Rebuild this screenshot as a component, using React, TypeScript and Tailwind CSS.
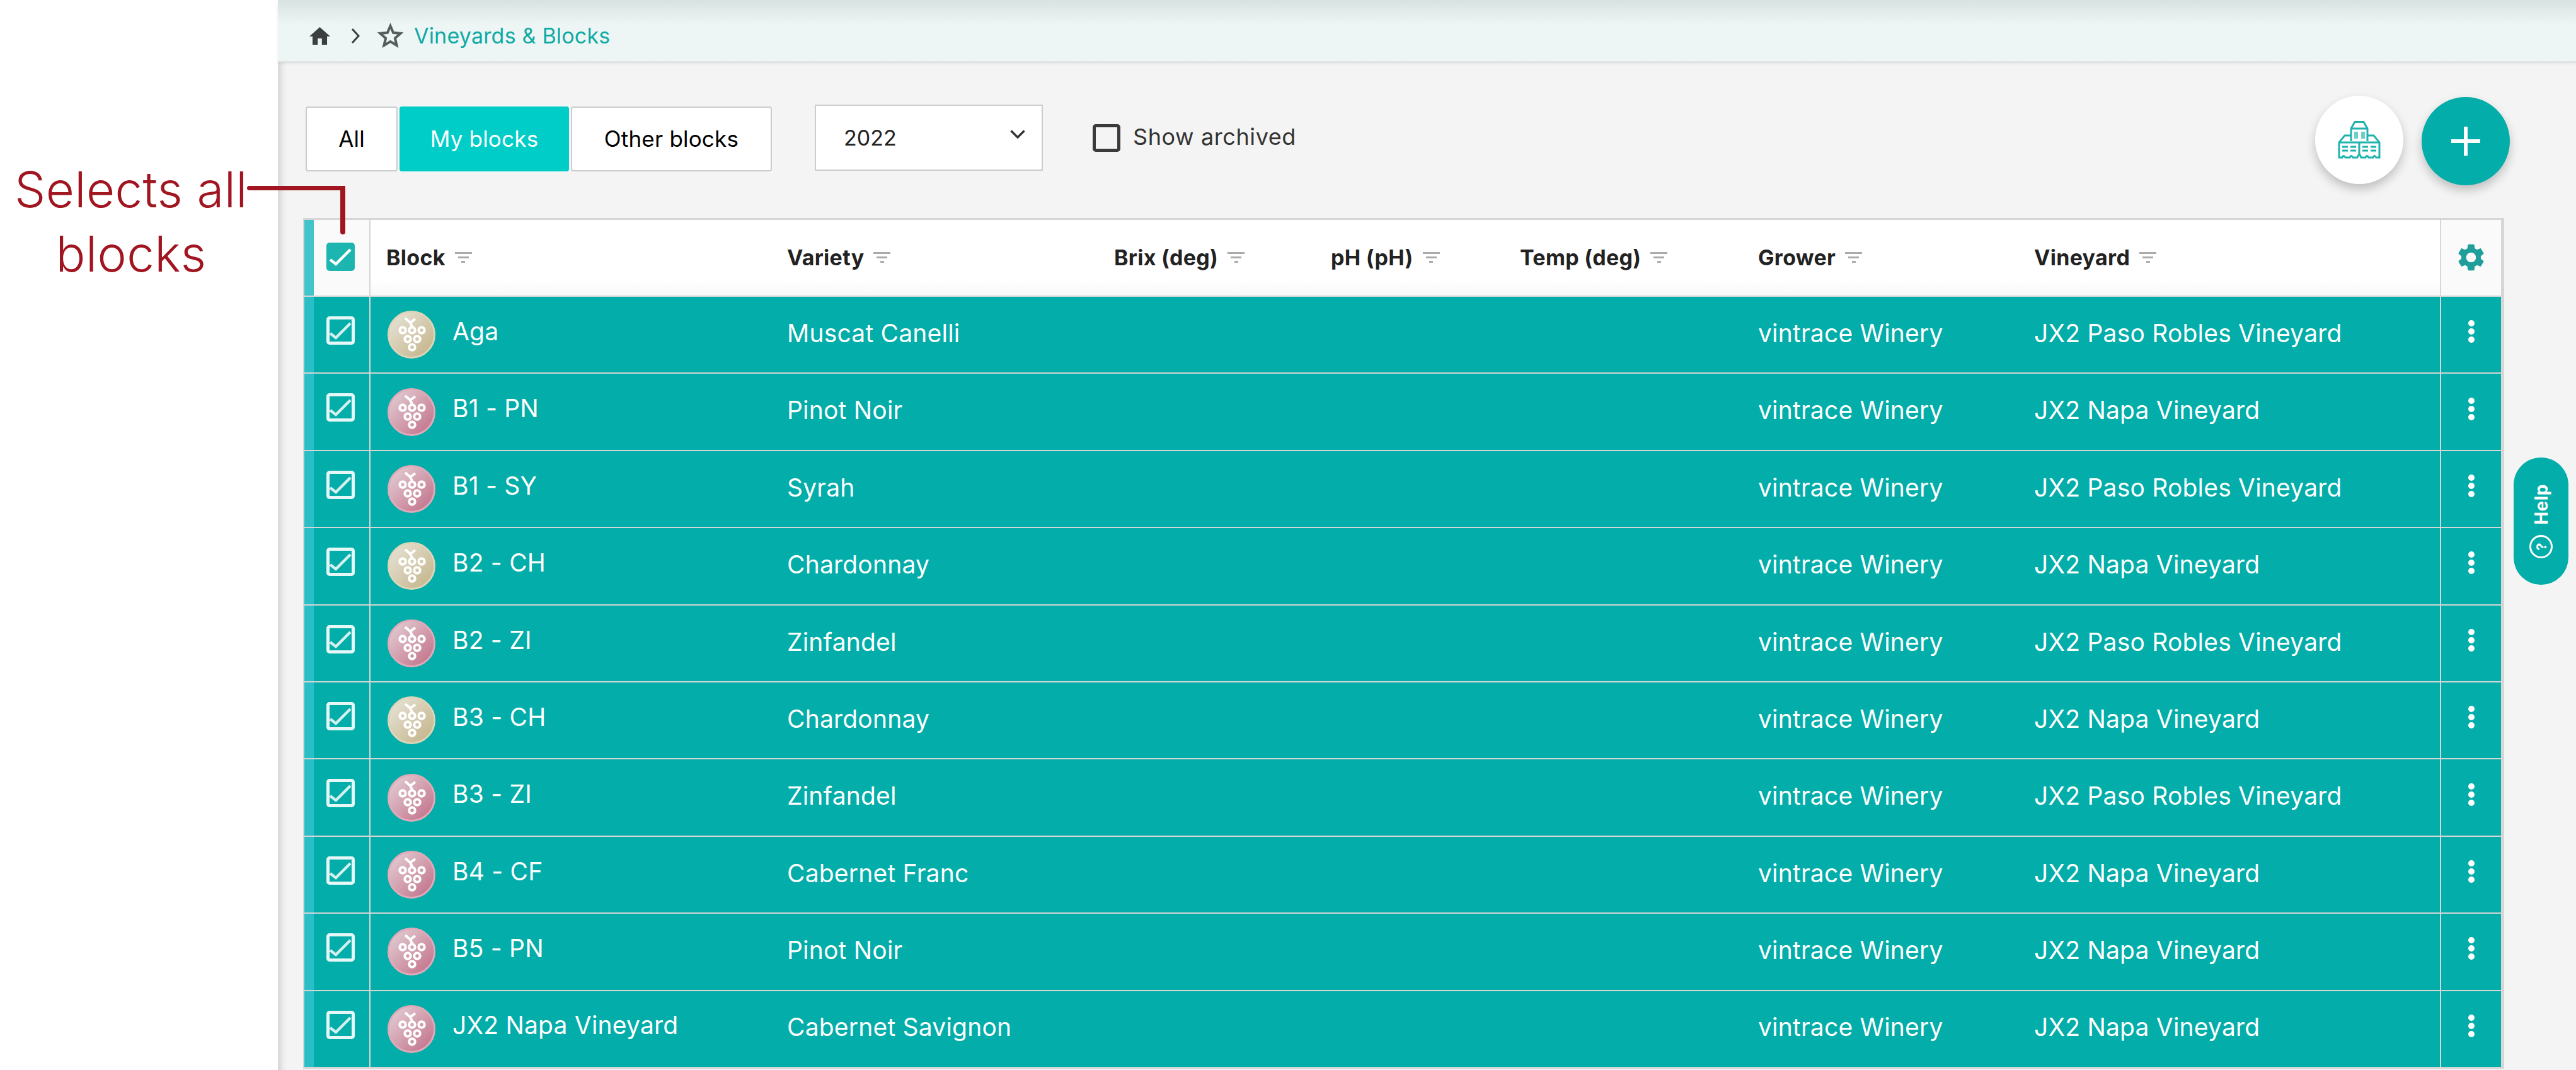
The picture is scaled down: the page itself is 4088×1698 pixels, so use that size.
import React from 'react';

interface BlockRow {
    name: string;
    variety: string;
    vineyard: string;
    white?: boolean;
}

const rows: BlockRow[] = [
    { name: 'Aga', variety: 'Muscat Canelli', vineyard: 'JX2 Paso Robles Vineyard', white: true },
    { name: 'B1 - PN', variety: 'Pinot Noir', vineyard: 'JX2 Napa Vineyard' },
    { name: 'B1 - SY', variety: 'Syrah', vineyard: 'JX2 Paso Robles Vineyard' },
    { name: 'B2 - CH', variety: 'Chardonnay', vineyard: 'JX2 Napa Vineyard', white: true },
    { name: 'B2 - ZI', variety: 'Zinfandel', vineyard: 'JX2 Paso Robles Vineyard' },
    { name: 'B3 - CH', variety: 'Chardonnay', vineyard: 'JX2 Napa Vineyard', white: true },
    { name: 'B3 - ZI', variety: 'Zinfandel', vineyard: 'JX2 Paso Robles Vineyard' },
    { name: 'B4 - CF', variety: 'Cabernet Franc', vineyard: 'JX2 Napa Vineyard' },
    { name: 'B5 - PN', variety: 'Pinot Noir', vineyard: 'JX2 Napa Vineyard' },
    { name: 'JX2 Napa Vineyard', variety: 'Cabernet Savignon', vineyard: 'JX2 Napa Vineyard' },
];

const gridCols = 'grid grid-cols-[105px_636px_519px_344px_300px_378px_438px_669px_97px]';

const SortIcon = () => (
    <span className="ml-[15px] flex flex-col items-center gap-[4.5px]">
        <span className="h-[2.5px] w-[27px] bg-[#aaaaaa]" />
        <span className="h-[2.5px] w-[17px] bg-[#aaaaaa]" />
        <span className="h-[2.5px] w-[6px] bg-[#aaaaaa]" />
    </span>
);

const HeaderCell = ({ label }: { label: string }) => (
    <div className="flex items-center pl-[25px] pb-[1px] text-[34px] font-bold tracking-[0.3px] text-[#222222]">
        {label}
        <SortIcon />
    </div>
);

const CheckMark = ({ color }: { color: string }) => (
    <svg viewBox="0 0 45 45" className="absolute left-[-5px] top-[-5px] h-[45px] w-[45px]" fill="none">
        <path d="M6 27 L15 34 L38 11" stroke={color} strokeWidth="4.5" />
    </svg>
);

const GrapeAvatar = ({ white }: { white?: boolean }) => (
    <div
        className={
            white
                ? 'h-[76px] w-[76px] shrink-0 rounded-full border-[3px] border-[#ddd5b8] bg-gradient-to-br from-[#e8e5da] to-[#c2b286]'
                : 'h-[76px] w-[76px] shrink-0 rounded-full border-[3px] border-[#e2a9b8] bg-gradient-to-br from-[#e2d2d8] to-[#bf6d87]'
        }
    >
        <svg viewBox="0 0 76 76" className="ml-[-3px] mt-[-3px] h-[76px] w-[76px]" fill="none" stroke="#ffffff">
            <path d="M28 12 L36 19 L44 13 M36 19 L39 25" strokeWidth="4" />
            <circle cx="24" cy="31" r="4.7" strokeWidth="4" />
            <circle cx="39" cy="31" r="4.7" strokeWidth="4" />
            <circle cx="54" cy="31" r="4.7" strokeWidth="4" />
            <circle cx="32" cy="45" r="4.7" strokeWidth="4" />
            <circle cx="47" cy="45" r="4.7" strokeWidth="4" />
            <circle cx="39" cy="58" r="4.7" strokeWidth="4" />
        </svg>
    </div>
);

const BuildingIcon = () => (
    <svg viewBox="0 0 68 60" className="h-[60px] w-[68px]" fill="none" stroke="#1fb3ae" strokeWidth="3">
        <path d="M21 32 V12 L27 1.5 H41 L47 12 V32" />
        <path d="M21 12 H47" />
        <path d="M26 17 H32 V28 H26 Z M37 17 H43 V28 H37 Z" fill="#6fcdc9" stroke="none" />
        <path d="M21 23 H11 L2 34 V58 H7 Q9 53 12 58 H19 Q21 53 24 58 H31 Q33 53 34 53 Q35 53 37 58 H44 Q46 53 49 58 H56 Q58 53 61 58 H66 V34 L57 23 H47" />
        <path d="M2 34 H66 M34 34 V53" />
        <path d="M7 41 H16 M7 47 H16 M20 41 H29 M20 47 H29 M39 41 H48 M39 47 H48 M52 41 H61 M52 47 H61" />
    </svg>
);

const Tab = ({ label, active, width }: { label: string; active?: boolean; width: string }) => (
    <div
        className={`flex h-[103px] items-center justify-center rounded-[4px] border-[2px] text-[35px] tracking-[0.2px] ${width} ${
            active ? 'border-[#00cdc8] bg-[#00cdc8] text-white' : 'border-[#cccccc] bg-white text-black'
        }`}
    >
        {label}
    </div>
);

const App: React.FC = () => {
    return (
        <div className="relative flex h-[1698px] w-[4088px] overflow-hidden bg-white font-['Inter',sans-serif]">
            <div className="w-[441px] shrink-0 bg-white" />

            <main className="flex-1 bg-[#f4f4f4] shadow-[inset_14px_0_12px_-10px_rgba(0,0,0,0.16)]">
                <div className="flex h-[99px] items-center border-b-[2px] border-[#dfe3e3] bg-gradient-to-b from-[#d8e2e1] via-[#eef6f5] via-40% to-[#eef6f5] pl-[50px] pt-[16px] shadow-[0_2px_4px_rgba(0,0,0,0.08)]">
                    <svg viewBox="2 3 20 17" className="h-[28px] w-[33px]" fill="#3b3f3f">
                        <path d="M10 20v-6h4v6h5v-8h3L12 3 2 12h3v8z" />
                    </svg>
                    <svg viewBox="0 0 16 24" className="ml-[32px] h-[24px] w-[16px]" fill="none" stroke="#3b3f3f" strokeWidth="3">
                        <path d="M3 1 L13 12 L3 23" />
                    </svg>
                    <svg viewBox="2 2 20 19.3" className="ml-[27px] h-[39px] w-[41px]" fill="#555b5b" stroke="#555b5b" strokeWidth="0.4">
                        <path d="M22 9.24l-7.19-.62L12 2 9.19 8.63 2 9.24l5.46 4.73L5.82 21 12 17.27 18.18 21l-1.63-7.03L22 9.24zM12 15.4l-3.76 2.27 1-4.28-3.32-2.88 4.38-.38L12 6.1l1.71 4.04 4.38.38-3.32 2.88 1 4.28L12 15.4z" />
                    </svg>
                    <span className="ml-[17px] text-[34px] tracking-[0.2px] text-[#10aaa5]">Vineyards &amp; Blocks</span>
                </div>

                <div className="relative flex h-[247px] items-start pl-[44px] pt-[70px]">
                    <div className="flex gap-[3px]">
                        <Tab label="All" width="w-[146px]" />
                        <Tab label="My blocks" active width="w-[269px]" />
                        <Tab label="Other blocks" width="w-[319px]" />
                    </div>
                    <div className="ml-[68px] mt-[-3px] flex h-[105px] w-[362px] items-center justify-between border-[2px] border-[#cccccc] bg-white pl-[44px] pr-[26px] text-[34px] text-[#222222]">
                        2022
                        <svg viewBox="0 0 24 14" className="mt-[-12px] h-[14px] w-[24px]" fill="none" stroke="#333333" strokeWidth="3.4">
                            <path d="M1.5 1.5 L12 12 L22.5 1.5" />
                        </svg>
                    </div>
                    <div className="ml-[79px] mt-[24px] flex items-center">
                        <span className="h-[44px] w-[44px] rounded-[5px] border-[5px] border-[#3a3a3a]" />
                        <span className="ml-[20px] mt-[-3px] text-[36px] tracking-[0.6px] text-[#333333]">Show archived</span>
                    </div>
                    <div className="absolute left-[3233px] top-[53px] h-[140px] w-[140px] rounded-full bg-white shadow-[0_8px_16px_rgba(0,0,0,0.22)]">
                        <div className="flex h-full items-center justify-center">
                            <BuildingIcon />
                        </div>
                    </div>
                    <div className="absolute left-[3402px] top-[55px] flex h-[140px] w-[140px] items-center justify-center rounded-full bg-[#03ada9] shadow-[0_8px_16px_rgba(0,0,0,0.22)]">
                        <svg viewBox="0 0 46 46" className="h-[46px] w-[46px]" fill="#ffffff">
                            <path d="M20 0 H26 V20 H46 V26 H26 V46 H20 V26 H0 V20 H20 Z" />
                        </svg>
                    </div>
                </div>

                <div className="ml-[40px] w-[3493px] border-[#d6d6d6] border-b-[3px] border-l-[2px] border-r-[5px] border-t-[3px]">
                    <div className={`${gridCols} h-[120px] bg-gradient-to-b from-white from-80% to-[#f8f8f8]`}>
                        <div className="flex border-r-[2px] border-[#d6d6d6] bg-[#fafafa]">
                            <div className="w-[15px] bg-[#42c4cb]" />
                            <div className="ml-[20px] mt-[36px] flex h-[45px] w-[45px] items-center justify-center rounded-[5px] bg-[#1db5b0]">
                                <div className="relative h-[35px] w-[35px]">
                                    <CheckMark color="#ffffff" />
                                </div>
                            </div>
                        </div>
                        <HeaderCell label="Block" />
                        <HeaderCell label="Variety" />
                        <HeaderCell label="Brix (deg)" />
                        <HeaderCell label="pH (pH)" />
                        <HeaderCell label="Temp (deg)" />
                        <HeaderCell label="Grower" />
                        <HeaderCell label="Vineyard" />
                        <div className="flex items-center justify-center border-l-[2px] border-[#d6d6d6] bg-[#fafafa] pb-[2px]">
                            <svg viewBox="2 2 20 20" className="h-[43px] w-[43px]" fill="#1f9e9c">
                                <path d="M19.14 12.94c.04-.3.06-.61.06-.94 0-.32-.02-.64-.07-.94l2.03-1.58c.18-.14.23-.41.12-.61l-1.92-3.32c-.12-.22-.37-.29-.59-.22l-2.39.96c-.5-.38-1.03-.7-1.62-.94l-.36-2.54c-.04-.24-.24-.41-.48-.41h-3.84c-.24 0-.43.17-.47.41l-.36 2.54c-.59.24-1.13.57-1.62.94l-2.39-.96c-.22-.08-.47 0-.59.22L2.74 8.87c-.12.21-.08.47.12.61l2.03 1.58c-.05.3-.09.63-.09.94s.02.64.07.94l-2.03 1.58c-.18.14-.23.41-.12.61l1.92 3.32c.12.22.37.29.59.22l2.39-.96c.5.38 1.03.7 1.62.94l.36 2.54c.05.24.24.41.48.41h3.84c.24 0 .44-.17.47-.41l.36-2.54c.59-.24 1.13-.56 1.62-.94l2.39.96c.22.08.47 0 .59-.22l1.92-3.32c.12-.22.07-.47-.12-.61l-2.01-1.58zM12 15.6c-1.98 0-3.6-1.62-3.6-3.6s1.62-3.6 3.6-3.6 3.6 1.62 3.6 3.6-1.62 3.6-3.6 3.6z" />
                            </svg>
                        </div>
                    </div>

                    {rows.map(row => (
                        <div
                            key={row.name}
                            className={`${gridCols} h-[122.4px] border-t-[2px] border-[#d6d6d6] bg-[#03ada9] text-[39px] tracking-[0.2px] text-white`}
                        >
                            <div className="flex border-r-[2px] border-[#d6d6d6]">
                                <div className="w-[15px] bg-[#2abfc6]" />
                                <div className="ml-[20px] mt-[31px] h-[45px] w-[45px] rounded-[5px] border-[5px] border-[#e6f7f7]">
                                    <div className="relative h-full w-full">
                                        <CheckMark color="#d4f0ef" />
                                    </div>
                                </div>
                            </div>
                            <div className="flex items-center pl-[27px]">
                                <GrapeAvatar white={row.white} />
                                <span className="ml-[27px] mt-[-10px]">{row.name}</span>
                            </div>
                            <div className="flex items-center pl-[25px] pb-[4px]">{row.variety}</div>
                            <div />
                            <div />
                            <div />
                            <div className="flex items-center pl-[25px] pb-[4px]">vintrace Winery</div>
                            <div className="flex items-center pl-[25px] pb-[4px]">{row.vineyard}</div>
                            <div className="flex flex-col items-center justify-center gap-[3px] border-l-[2px] border-[#d6d6d6] pb-[10px]">
                                <span className="h-[10px] w-[10px] rounded-full bg-white" />
                                <span className="h-[10px] w-[10px] rounded-full bg-white" />
                                <span className="h-[10px] w-[10px] rounded-full bg-white" />
                            </div>
                        </div>
                    ))}
                </div>
            </main>

            {/* callout over the page */}
            <div className="absolute left-[14px] top-[250px] w-[388px] text-center text-[78px] font-light leading-[102px] tracking-[0.4px] text-[#a01520]">
                Selects all
                <br />
                blocks
            </div>
            <div className="absolute left-[392px] top-[295px] h-[7px] w-[156px] rounded-l-full bg-[#a01520]" />
            <div className="absolute left-[540px] top-[295px] h-[77px] w-[8px] rounded-b-full bg-[#a01520]" />

            <div className="absolute left-[3989px] top-[726px] flex h-[202px] w-[87px] flex-col items-center justify-center gap-[16px] rounded-full bg-[#03ada9] text-white">
                <span className="rotate-180 text-[28px] font-bold leading-none tracking-[0.5px] [writing-mode:vertical-rl]">Help</span>
                <span className="flex h-[37px] w-[37px] -rotate-90 items-center justify-center rounded-full border-[3px] border-white text-[22px] font-bold leading-none">
                    ?
                </span>
            </div>
        </div>
    );
};

export default App;
